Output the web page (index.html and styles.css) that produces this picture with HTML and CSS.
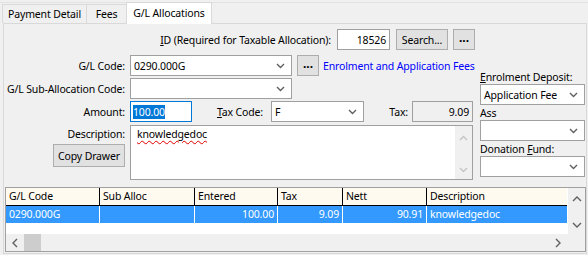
FILE: index.html
```html
<!DOCTYPE html>
<html lang="en">
<head>
    <meta charset="UTF-8">
    <title>G/L Allocations</title>
    <link rel="stylesheet" href="styles.css">
</head>
<body>
    <div class="topline"></div>
    <!-- Tabs -->
    <div class="tabs">
        <div class="tab tab-payment">Payment Detail</div>
        <div class="tab tab-fees">Fees</div>
        <div class="tab active">G/L Allocations</div>
    </div>

    <div class="panel">
        <div class="upper">
            <div class="form">
                <div class="row row-id">
                    <span class="lbl"><u>I</u>D (Required for Taxable Allocation):</span>
                    <div class="textbox id-box num">18526</div>
                    <div class="btn search-btn">Search...</div>
                    <div class="btn dots-btn">...</div>
                </div>

                <div class="row row-code">
                    <span class="lbl lbl-left">G/L Code:</span>
                    <div class="combo code-combo"><span>0290.000G</span><svg class="chev" width="9" height="6"><path d="M1 1 L4.5 4.5 L8 1" /></svg></div>
                    <div class="btn dots-btn code-dots">...</div>
                    <span class="link">Enrolment and Application Fees</span>
                </div>

                <div class="row row-sub">
                    <span class="lbl lbl-left">G/L Sub-Allocation Code:</span>
                    <div class="combo code-combo"><span></span><svg class="chev" width="9" height="6"><path d="M1 1 L4.5 4.5 L8 1" /></svg></div>
                </div>

                <div class="row row-amount">
                    <span class="lbl lbl-left">Amount:</span>
                    <div class="textbox amount-box focused"><span class="sel">100.00</span></div>
                    <span class="lbl taxcode-lbl"><u>T</u>ax Code:</span>
                    <div class="combo tax-combo"><span>F</span><svg class="chev" width="9" height="6"><path d="M1 1 L4.5 4.5 L8 1" /></svg></div>
                    <span class="lbl tax-lbl">Tax:</span>
                    <div class="textbox readonly tax-box num">9.09</div>
                </div>

                <div class="row row-desc">
                    <div class="desc-left">
                        <span class="lbl">Description:</span>
                        <div class="btn copy-btn">Copy Drawer</div>
                    </div>
                    <div class="textarea">
                        <div class="textarea-text"><span class="misspelt">knowledgedoc</span></div>
                        <div class="ta-scroll">
                            <svg width="9" height="6"><path d="M1 5 L4.5 1.5 L8 5" /></svg>
                            <svg width="9" height="6"><path d="M1 1 L4.5 4.5 L8 1" /></svg>
                        </div>
                    </div>
                </div>
            </div>

            <div class="side">
                <div class="side-lbl"><u>E</u>nrolment Deposit:</div>
                <div class="combo side-combo"><span>Application Fee</span><svg class="chev" width="9" height="6"><path d="M1 1 L4.5 4.5 L8 1" /></svg></div>
                <div class="side-lbl">Ass</div>
                <div class="combo side-combo"><span></span><svg class="chev" width="9" height="6"><path d="M1 1 L4.5 4.5 L8 1" /></svg></div>
                <div class="side-lbl side-lbl-gap">Donation <u>F</u>und:</div>
                <div class="combo side-combo"><span></span><svg class="chev" width="9" height="6"><path d="M1 1 L4.5 4.5 L8 1" /></svg></div>
            </div>
        </div>

        <!-- Allocations grid -->
        <div class="grid">
            <div class="grid-body">
                <div class="grid-head">
                    <div class="cell c1">G/L Code</div>
                    <div class="cell c2">Sub Alloc</div>
                    <div class="cell c3">Entered</div>
                    <div class="cell c4">Tax</div>
                    <div class="cell c5">Nett</div>
                    <div class="cell c6">Description</div>
                </div>
                <div class="grid-row selected">
                    <div class="cell c1">0290.000G</div>
                    <div class="cell c2"></div>
                    <div class="cell c3 num">100.00</div>
                    <div class="cell c4 num">9.09</div>
                    <div class="cell c5 num">90.91</div>
                    <div class="cell c6">knowledgedoc</div>
                </div>
            </div>
            <div class="vscroll">
                <svg width="10" height="7"><path d="M1 6 L5 2 L9 6" /></svg>
                <svg width="10" height="7"><path d="M1 1 L5 5 L9 1" /></svg>
            </div>
            <div class="hscroll">
                <svg class="h-left" width="7" height="10"><path d="M6 1 L2 5 L6 9" /></svg>
                <div class="thumb"></div>
                <svg class="h-right" width="7" height="10"><path d="M1 1 L5 5 L1 9" /></svg>
            </div>
            <div class="corner"></div>
        </div>
    </div>
</body>
</html>
```

FILE: styles.css
```css
body {
    margin: 0;
    width: 588px;
    height: 255px;
    overflow: hidden;
    background-color: #f0f0f0;
    font-family: "Noto Sans", "Segoe UI", sans-serif;
    font-size: 10.5px;
    letter-spacing: -0.15px;
    color: #000;
}
.topline {
    height: 2px;
    border-bottom: 1px solid #e3e3e3;
    margin-bottom: -1px;
}

/* Tabs */
.tabs {
    display: flex;
    align-items: flex-end;
    height: 21px;
    padding-left: 2px;
}
.tab {
    height: 19px;
    line-height: 19px;
    text-align: center;
    border: 1px solid #d9d9d9;
    border-bottom: none;
    margin-right: -1px;
    background-color: #f0f0f0;
    box-sizing: border-box;
    white-space: nowrap;
}
.tab-payment {
    width: 85px;
}
.tab-fees {
    width: 41px;
}
.tab.active {
    width: 86px;
    height: 22px;
    line-height: 21px;
    margin-bottom: -1px;
    background-color: #fff;
    position: relative;
    z-index: 1;
}

.panel {
    margin: 0 1px 0 3px;
    height: 231px;
    border: 1px solid #d9d9d9;
    box-sizing: border-box;
    background-color: #f0f0f0;
}
.upper {
    display: flex;
    padding-top: 5px;
}
.form {
    width: 472px;
}
.row {
    display: flex;
    align-items: center;
    height: 21px;
}
.row > * {
    flex-shrink: 0;
}
.lbl {
    white-space: nowrap;
}
.lbl-left {
    width: 121px;
    margin-right: 5px;
    text-align: right;
}

/* Controls */
.textbox, .combo {
    height: 21px;
    box-sizing: border-box;
    background-color: #fff;
    border: 1px solid #a0a0a0;
    display: flex;
    align-items: center;
    padding: 0 3px;
    white-space: nowrap;
}
.textbox.num {
    justify-content: flex-end;
}
.textbox.readonly {
    background-color: #f0f0f0;
}
.textbox.focused {
    border-color: #0078d7;
    padding-left: 2px;
}
.sel {
    background-color: #0078d7;
    color: #fff;
    line-height: 14px;
}
.combo {
    justify-content: space-between;
    padding-right: 6px;
}
.chev path, .ta-scroll path, .vscroll path, .hscroll path {
    fill: none;
    stroke: #606060;
    stroke-width: 1.4;
}
.btn {
    height: 21px;
    box-sizing: border-box;
    background-color: #e1e1e1;
    border: 1px solid #adadad;
    display: flex;
    align-items: center;
    justify-content: center;
    white-space: nowrap;
}

.row-id {
    justify-content: flex-end;
    padding-right: 1px;
}
.id-box {
    width: 53px;
    margin-left: 6px;
}
.search-btn {
    width: 52px;
    margin-left: 6px;
}
.dots-btn {
    width: 22px;
    margin-left: 5px;
    font-size: 12px;
    font-weight: bold;
    letter-spacing: 0;
    padding-bottom: 4px;
}
.row-code {
    margin-top: 5px;
}
.code-combo {
    width: 162px;
}
.code-dots {
    margin-left: 5px;
}
.link {
    margin-left: 4px;
    color: #0000ff;
    white-space: nowrap;
}
.row-sub {
    margin-top: 2px;
}
.row-amount {
    margin-top: 2px;
}
.amount-box {
    width: 62px;
}
.taxcode-lbl {
    margin-left: 25px;
    width: 54px;
}
.tax-combo {
    width: 93px;
}
.tax-lbl {
    margin-left: auto;
    margin-right: 4px;
}
.tax-box {
    width: 61px;
    margin-right: 3px;
}

.row-desc {
    margin-top: 3px;
    height: 55px;
    align-items: flex-start;
}
.desc-left {
    width: 121px;
    margin-right: 5px;
    display: flex;
    flex-direction: column;
    align-items: flex-end;
    padding-top: 2px;
}
.copy-btn {
    width: 72px;
    height: 23px;
    margin-top: 3px;
}
.textarea {
    width: 343px;
    height: 55px;
    box-sizing: border-box;
    border: 1px solid #a0a0a0;
    background-color: #fff;
    display: flex;
}
.textarea-text {
    flex: 1;
    padding: 1px 6px;
}
.misspelt {
    text-decoration: underline wavy #e00000;
    text-decoration-thickness: 1px;
    text-underline-offset: 2px;
}
.ta-scroll {
    width: 17px;
    background-color: #f0f0f0;
    display: flex;
    flex-direction: column;
    justify-content: space-between;
    align-items: center;
    padding: 9px 0 6px;
}
.ta-scroll path {
    stroke: #c4c4c4;
}

/* Right column */
.side {
    width: 105px;
    margin-left: 4px;
    padding-top: 41px;
}
.side-lbl {
    height: 14px;
    line-height: 14px;
    white-space: nowrap;
}
.side-combo {
    width: 105px;
    margin-bottom: 1px;
}
.side-lbl-gap {
    margin-top: 1px;
}

/* Grid */
.grid {
    margin: 7px 0 0 1px;
    width: 581px;
    height: 65px;
    box-sizing: border-box;
    border: 1px solid #a0a0a0;
    display: grid;
    grid-template-columns: 1fr 17px;
    grid-template-rows: 46px 17px;
    background-color: #fff;
}
.grid-head, .grid-row {
    display: flex;
    width: 561px;
    height: 17px;
}
.grid-head {
    background-color: #fffaf0;
    border-bottom: 1px solid #000;
}
.grid-row.selected {
    background-color: #3399ff;
    color: #fff;
}
.cell {
    box-sizing: border-box;
    line-height: 16px;
    padding: 0 3px;
    border-right: 1px solid #000;
    white-space: nowrap;
    overflow: hidden;
}
.grid-row .cell {
    border-right-color: #fff;
}
.cell.num {
    text-align: right;
}
.c1 { width: 94px; }
.c2 { width: 95px; }
.c3 { width: 83px; }
.c4 { width: 65px; }
.c5 { width: 84px; }
.c6 { width: 140px; border-right: none; }
.vscroll {
    background-color: #f0f0f0;
    display: flex;
    flex-direction: column;
    justify-content: space-between;
    align-items: center;
    padding: 7px 0 5px;
}
.hscroll {
    background-color: #f0f0f0;
    display: flex;
    align-items: center;
}
.h-left {
    margin: 0 6px 0 5px;
}
.thumb {
    width: 17px;
    height: 17px;
    background-color: #cdcdcd;
}
.h-right {
    margin-left: auto;
    margin-right: 6px;
}
.corner {
    background-color: #f0f0f0;
}
```
